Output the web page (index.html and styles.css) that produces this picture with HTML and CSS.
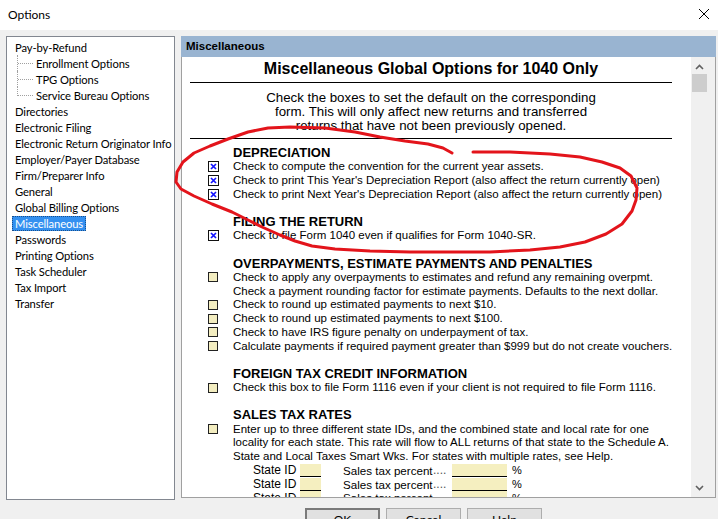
FILE: index.html
```html
<!DOCTYPE html>
<html>
<head>
<meta charset="utf-8">
<title>Options</title>
<link rel="stylesheet" href="styles.css">
</head>
<body>
<div class="titlebar">
  <span class="title">Options</span>
  <svg class="close" width="12" height="12" viewBox="0 0 12 12"><path d="M1 1L11 11M11 1L1 11" stroke="#000" stroke-width="1"/></svg>
</div>
<div class="main">
  <div class="tree">
    <div class="node"><span class="label">Pay-by-Refund</span></div>
    <div class="children">
      <div class="node child"><span class="label">Enrollment Options</span></div>
      <div class="node child"><span class="label">TPG Options</span></div>
      <div class="node child last"><span class="label">Service Bureau Options</span></div>
    </div>
    <div class="node"><span class="label">Directories</span></div>
    <div class="node"><span class="label">Electronic Filing</span></div>
    <div class="node"><span class="label">Electronic Return Originator Info</span></div>
    <div class="node"><span class="label">Employer/Payer Database</span></div>
    <div class="node"><span class="label">Firm/Preparer Info</span></div>
    <div class="node"><span class="label">General</span></div>
    <div class="node"><span class="label">Global Billing Options</span></div>
    <div class="node"><span class="label sel">Miscellaneous</span></div>
    <div class="node"><span class="label">Passwords</span></div>
    <div class="node"><span class="label">Printing Options</span></div>
    <div class="node"><span class="label">Task Scheduler</span></div>
    <div class="node"><span class="label">Tax Import</span></div>
    <div class="node"><span class="label">Transfer</span></div>
  </div>
  <div class="panel">
    <div class="panel-head">Miscellaneous</div>
    <div class="panel-body">
      <div class="content">
        <div class="column">
          <h1 class="doc-title">Miscellaneous Global Options for 1040 Only</h1>
          <p class="intro">Check the boxes to set the default on the corresponding<br>form. This will only affect new returns and transferred<br>returns that have not been previously opened.</p>

          <div class="section first">
            <h2 class="sec-head">DEPRECIATION</h2>
            <div class="row"><span class="slot"><svg class="cbx" width="11" height="11" viewBox="0 0 11 11"><rect x="0.5" y="0.5" width="10" height="10" fill="#fff" stroke="#111"/><path d="M3 3L8 8M8 3L3 8" stroke="#1414ff" stroke-width="1.7"/></svg></span><span class="txt">Check to compute the convention for the current year assets.</span></div>
            <div class="row"><span class="slot"><svg class="cbx" width="11" height="11" viewBox="0 0 11 11"><rect x="0.5" y="0.5" width="10" height="10" fill="#fff" stroke="#111"/><path d="M3 3L8 8M8 3L3 8" stroke="#1414ff" stroke-width="1.7"/></svg></span><span class="txt">Check to print This Year's Depreciation Report (also affect the return currently open)</span></div>
            <div class="row"><span class="slot"><svg class="cbx" width="11" height="11" viewBox="0 0 11 11"><rect x="0.5" y="0.5" width="10" height="10" fill="#fff" stroke="#111"/><path d="M3 3L8 8M8 3L3 8" stroke="#1414ff" stroke-width="1.7"/></svg></span><span class="txt">Check to print Next Year's Depreciation Report (also affect the return currently open)</span></div>
          </div>

          <div class="section">
            <h2 class="sec-head">FILING THE RETURN</h2>
            <div class="row"><span class="slot"><svg class="cbx" width="11" height="11" viewBox="0 0 11 11"><rect x="0.5" y="0.5" width="10" height="10" fill="#fff" stroke="#111"/><path d="M3 3L8 8M8 3L3 8" stroke="#1414ff" stroke-width="1.7"/></svg></span><span class="txt">Check to file Form 1040 even if qualifies for Form 1040-SR.</span></div>
          </div>

          <div class="section">
            <h2 class="sec-head">OVERPAYMENTS, ESTIMATE PAYMENTS AND PENALTIES</h2>
            <div class="row"><span class="slot"><span class="cb"></span></span><span class="txt">Check to apply any overpayments to estimates and refund any remaining overpmt.</span></div>
            <div class="row"><span class="slot"></span><span class="txt">Check a payment rounding factor for estimate payments. Defaults to the next dollar.</span></div>
            <div class="row"><span class="slot"><span class="cb"></span></span><span class="txt">Check to round up estimated payments to next $10.</span></div>
            <div class="row"><span class="slot"><span class="cb"></span></span><span class="txt">Check to round up estimated payments to next $100.</span></div>
            <div class="row"><span class="slot"><span class="cb"></span></span><span class="txt">Check to have IRS figure penalty on underpayment of tax.</span></div>
            <div class="row"><span class="slot"><span class="cb"></span></span><span class="txt">Calculate payments if required payment greater than $999 but do not create vouchers.</span></div>
          </div>

          <div class="section">
            <h2 class="sec-head">FOREIGN TAX CREDIT INFORMATION</h2>
            <div class="row"><span class="slot"><span class="cb"></span></span><span class="txt">Check this box to file Form 1116 even if your client is not required to file Form 1116.</span></div>
          </div>

          <div class="section">
            <h2 class="sec-head">SALES TAX RATES</h2>
            <div class="row"><span class="slot"><span class="cb"></span></span><span class="txt">Enter up to three different state IDs, and the combined state and local rate for one</span></div>
            <div class="row"><span class="slot"></span><span class="txt justify">locality for each state. This rate will flow to ALL returns of that state to the Schedule A.</span></div>
            <div class="row"><span class="slot"></span><span class="txt">State and Local Taxes Smart Wks. For states with multiple rates, see Help.</span></div>
            <div class="state-row"><span class="st-label">State ID</span><span class="fld short"></span><span class="pct-label">Sales tax percent</span><span class="dots">....</span><span class="fld long"></span><span class="pct">%</span></div>
            <div class="state-row"><span class="st-label">State ID</span><span class="fld short"></span><span class="pct-label">Sales tax percent</span><span class="dots">....</span><span class="fld long"></span><span class="pct">%</span></div>
            <div class="state-row"><span class="st-label">State ID</span><span class="fld short"></span><span class="pct-label">Sales tax percent</span><span class="dots">....</span><span class="fld long"></span><span class="pct">%</span></div>
          </div>
        </div>
      </div>
      <div class="vscroll">
        <svg class="arrow" width="9" height="6" viewBox="0 0 9 6"><path d="M1 5L4.5 1.5L8 5" fill="none" stroke="#606060" stroke-width="1.6"/></svg>
        <div class="thumb"></div>
        <div class="track"></div>
        <svg class="arrow" width="9" height="6" viewBox="0 0 9 6"><path d="M1 1L4.5 4.5L8 1" fill="none" stroke="#606060" stroke-width="1.6"/></svg>
      </div>
      <div class="gutter"></div>
    </div>
  </div>
</div>
<div class="buttons">
  <button class="btn default">OK</button>
  <button class="btn">Cancel</button>
  <button class="btn">Help</button>
</div>
<svg class="annot" width="718" height="519" viewBox="0 0 718 519">
  <polyline fill="none" stroke="#e3141b" stroke-width="3" stroke-linejoin="round" stroke-linecap="round"
    points="473,152 510,152 550,154 580,157 602,162 620,168 631,176 637,188 636,200 632,211 622,224 606,234 585,242 560,247 530,250 490,252 450,252 410,252 370,251 335,249 312,246 295,241 280,235 262,227 248,220 232,212 212,204 194,196 181,189 176,182 177,172 183,162 194,153 210,146 228,139 248,132 268,128 290,127 325,128 355,132 380,137 405,141 428,144 443,148 452,153"/>
</svg>
</body>
</html>
```
FILE: styles.css
```css
* { box-sizing: border-box; margin: 0; padding: 0; }
html, body { width: 718px; height: 519px; overflow: hidden; }
body {
  background: #f0f0f0;
  font-family: "Liberation Sans", Arial, sans-serif;
  color: #000;
  position: relative;
}

.titlebar {
  height: 30px;
  background: #fff;
  display: flex;
  align-items: center;
  justify-content: space-between;
  padding: 0 5px 2px 8px;
}
.title { font-family: "Lato", "Liberation Sans", sans-serif; font-size: 12px; }
.close { margin-right: 3px; }

.main {
  display: flex;
  gap: 6px;
  padding: 6px 2px 0 6px;
}

.tree {
  width: 169px;
  height: 464px;
  border: 1px solid #828790;
  background: #fff;
  padding: 2px 0 0 5px;
  font-family: "Lato", "Liberation Sans", sans-serif;
  font-size: 11.2px;
  letter-spacing: -0.1px;
}
.node { height: 16px; display: flex; align-items: center; }
.label { padding: 0 3px; line-height: 15px; height: 15px; white-space: nowrap; }
.label.sel { background: #3390f0; color: #fff; outline: 1px dotted #1a4f8a; outline-offset: -1px; }
.children { margin-left: 5px; }
.child { align-items: stretch; }
.child .label { align-self: center; }
.child::before {
  content: "";
  width: 15px;
  flex: none;
  border-left: 1px dotted #a0a0a0;
  background: repeating-linear-gradient(to right, #a0a0a0 0 1px, transparent 1px 2px) no-repeat 0 8px / 100% 1px;
}
.child.last::before { height: 9px; }

.panel {
  width: 535px;
  height: 462px;
  display: flex;
  flex-direction: column;
}
.panel-head {
  height: 21px;
  flex: none;
  background: #99b4d1;
  font-weight: bold;
  font-size: 11.5px;
  line-height: 21px;
  padding-left: 5px;
}
.panel-body {
  flex: 1;
  min-height: 0;
  display: flex;
  border-left: 1px solid #a0a0a0;
  border-bottom: 1px solid #a0a0a0;
}
.content {
  width: 509px;
  background: #fff;
  overflow: hidden;
}
.column { width: 482px; margin-left: 8px; }

.doc-title {
  font-size: 16px;
  font-weight: bold;
  line-height: 20px;
  text-align: center;
  padding: 2px 0 3px;
  border-bottom: 1px solid #000;
}
.intro {
  font-size: 13.3px;
  line-height: 14px;
  text-align: center;
  padding: 8px 0 5px;
  border-bottom: 1px solid #000;
}

.section { margin-top: 13.75px; padding-left: 43px; }
.section.first { margin-top: 7px; }
.sec-head { font-size: 13px; font-weight: bold; line-height: 14px; white-space: nowrap; }
.row {
  height: 13.75px;
  display: flex;
  align-items: center;
  margin-left: -43px;
}
.slot { width: 43px; flex: none; padding-left: 18px; display: flex; align-items: center; }
.txt { font-size: 11.5px; white-space: nowrap; line-height: 13px; }
.txt.justify { width: 436px; text-align: justify; text-align-last: justify; }

.cb {
  width: 10px;
  height: 10px;
  border: 1px solid #222;
  background: #f3edc0;
}
.cbx { display: block; }

.state-row {
  height: 13.75px;
  display: flex;
  align-items: center;
  font-size: 12px;
  padding-left: 20px;
  white-space: nowrap;
}
.st-label { width: 47px; flex: none; }
.fld { height: 13px; flex: none; background: #f5efc0; border-bottom: 1px solid #000; }
.fld.short { width: 21px; margin-right: 22px; }
.pct-label { width: 90px; flex: none; font-size: 11.6px; }
.dots { width: 19px; flex: none; color: #555; }
.fld.long { width: 55px; margin-right: 5px; }
.pct { font-size: 11px; }

.vscroll {
  width: 17px;
  background: #f0f0f0;
  display: flex;
  flex-direction: column;
  align-items: center;
  padding: 7px 0 6px;
}
.arrow { flex: none; }
.thumb { width: 15px; height: 18px; background: #cdcdcd; margin-top: 4px; margin-right: 1px; }
.track { flex: 1; }
.gutter { width: 8px; border-right: 1px solid #a0a0a0; background: #f0f0f0; }

.buttons {
  display: flex;
  gap: 6px;
  padding-left: 305px;
  margin-top: 8px;
}
.btn {
  width: 75px;
  height: 23px;
  background: #e1e1e1;
  border: 1px solid #adadad;
  font-family: "Lato", "Liberation Sans", sans-serif;
  font-size: 12px;
  color: #000;
}
.btn.default { border: 2px solid #7a7a7a; }

.annot { position: absolute; left: 0; top: 0; pointer-events: none; }
```
